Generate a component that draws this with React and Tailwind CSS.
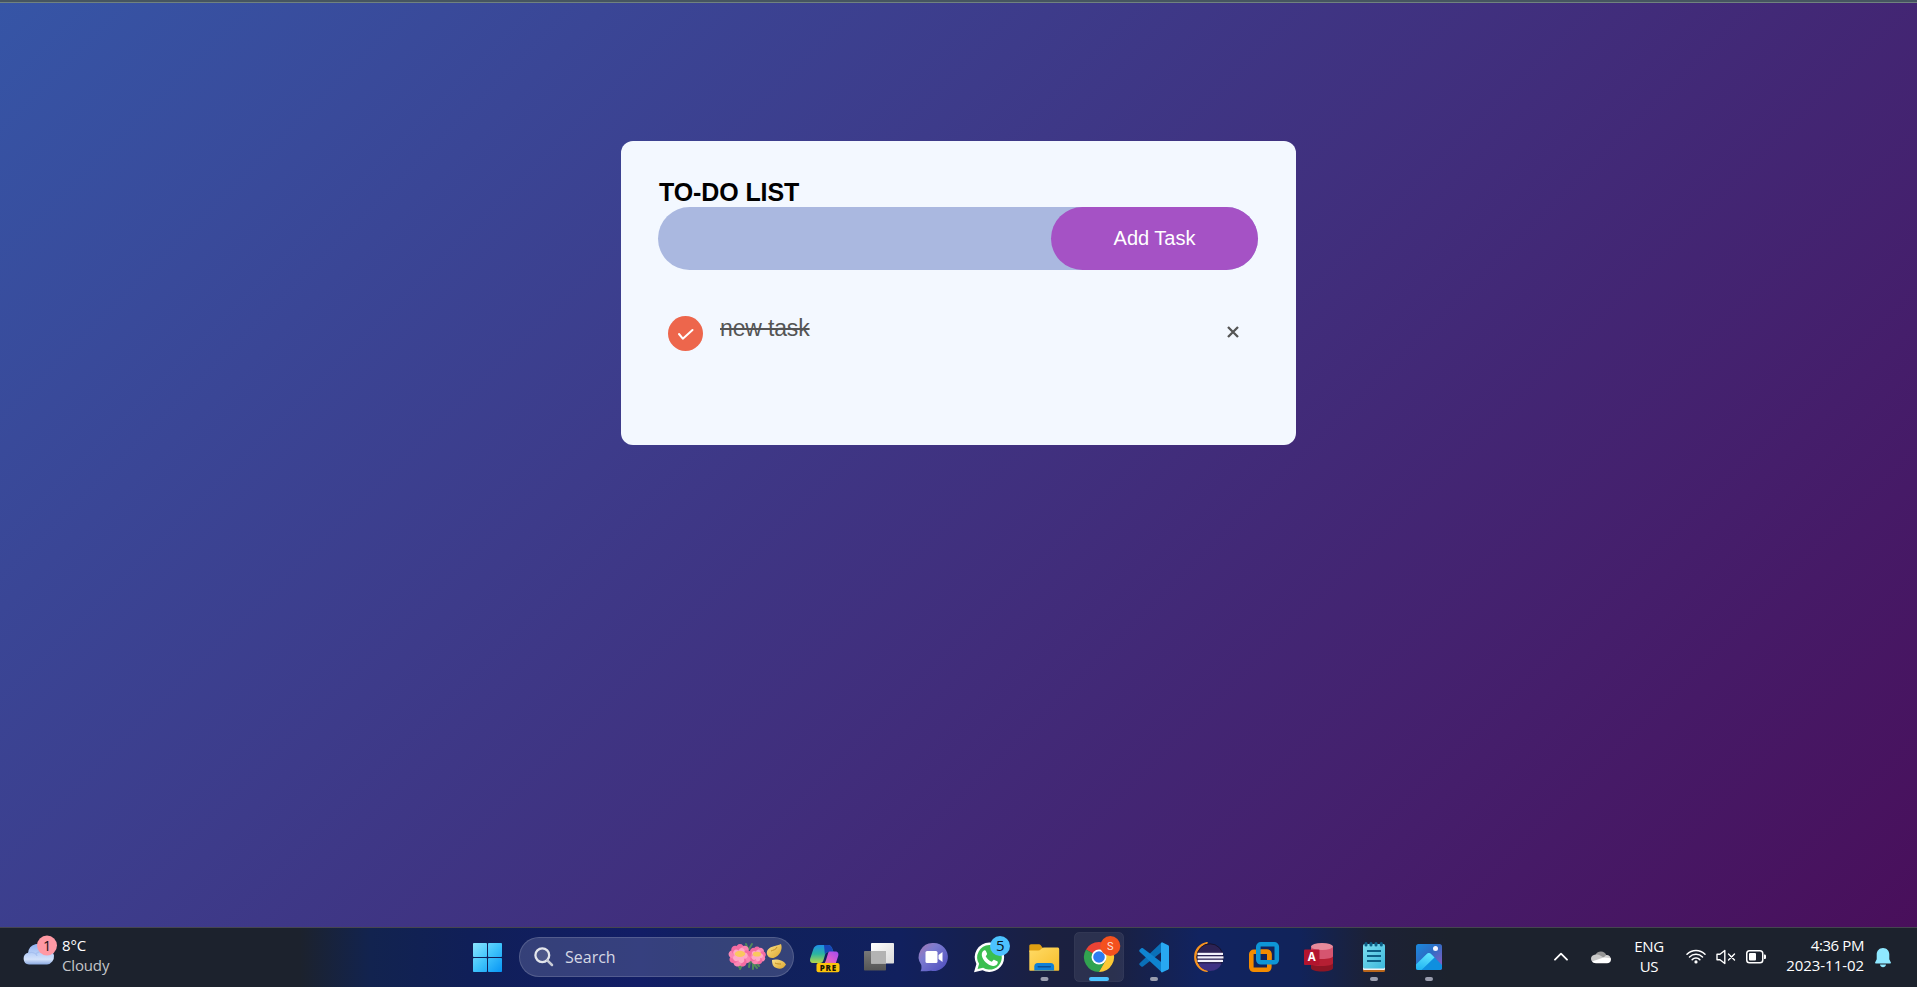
import React from "react";

const Copilot = () => (
  <svg width="55" height="59" viewBox="0 0 55 59">
    <defs>
      <linearGradient id="cpA" x1="0" y1="0" x2="0" y2="1">
        <stop offset="0" stopColor="#1f8fe8" />
        <stop offset="0.5" stopColor="#2bb5a0" />
        <stop offset="1" stopColor="#b4d84a" />
      </linearGradient>
      <linearGradient id="cpB" x1="1" y1="0" x2="0" y2="1">
        <stop offset="0" stopColor="#a04bf0" />
        <stop offset="0.5" stopColor="#d95bd0" />
        <stop offset="1" stopColor="#f58a6a" />
      </linearGradient>
    </defs>
    <path d="M22 17h9c2 0 3 1 4 3l1.500 4h-5c-2 0-3 1-3.500 3l-1.500 5c-.6 2-1.500 3-3.500 3h-7c-2.500 0-3.500-2-2.800-4.500l3-9C17 18.500 19 17 22 17z" fill="url(#cpA)" />
    <path d="M27 17h4c2 0 3 1 4 3l1.500 4h-5c-2 0-3 .8-3.600 2.600z" fill="#1746b8" />
    <path d="M33 23.500h5c3 0 4 2 3.200 4.500l-3 9H24l3-1.500c1-.6 1.600-2 2-3.500l2-6.500c.4-1.400 1-2 2-2z" fill="url(#cpB)" />
    <rect x="19.500" y="35" width="23" height="9.300" rx="2" fill="#fdc40a" />
    <text x="31.300" y="42.600" fontSize="8" fontWeight="800" textAnchor="middle" letterSpacing="0.7" fill="#1b1608" fontFamily="Open Sans, sans-serif">PRE</text>
  </svg>
);

const TaskView = () => (
  <svg width="55" height="59" viewBox="0 0 55 59">
    <defs>
      <linearGradient id="tvA" x1="0" y1="0" x2="1" y2="1">
        <stop offset="0" stopColor="#fff" />
        <stop offset="1" stopColor="#d9d9d9" />
      </linearGradient>
      <linearGradient id="tvB" x1="0" y1="0" x2="0" y2="1">
        <stop offset="0" stopColor="#787878" />
        <stop offset="1" stopColor="#555" />
      </linearGradient>
    </defs>
    <rect x="12" y="23" width="22" height="19.500" rx="0.800" fill="url(#tvB)" />
    <rect x="19" y="15" width="23" height="20.500" rx="0.800" fill="url(#tvA)" />
    <rect x="19" y="23" width="15" height="12.500" fill="#b3b3b3" />
  </svg>
);

const Chat = () => (
  <svg width="55" height="59" viewBox="0 0 55 59">
    <defs>
      <linearGradient id="chA" x1="0" y1="0" x2="1" y2="1">
        <stop offset="0" stopColor="#a878b0" />
        <stop offset="0.350" stopColor="#7b7bd0" />
        <stop offset="1" stopColor="#4b4bbd" />
      </linearGradient>
    </defs>
    <path d="M27 15a14 14 0 1 1-3 27.700c-3 .5-6 .6-10.500.6 1-2 1.200-3.300.8-6.300A14 14 0 0 1 27 15z" fill="url(#chA)" />
    <rect x="18.500" y="23" width="12" height="12" rx="1.500" fill="#fff" />
    <path d="M31.500 27l4-3v10l-4-3z" fill="#fff" />
  </svg>
);

const WhatsApp = () => (
  <svg width="55" height="59" viewBox="0 0 55 59">
    <path d="M27.300 14.500a14.700 14.700 0 1 1-6.700 27.700L12 44.300l2.400-8.200A14.700 14.700 0 0 1 27.300 14.500z" fill="#fff" />
    <path d="M27.300 17a12.300 12.300 0 1 1-6.200 22.800l-5.500 1.300 1.500-5.300A12.300 12.300 0 0 1 27.300 17z" fill="#3bbf50" />
    <path d="M22.300 22.300c.7-.2 1.300 0 1.600.7l1.100 2.600c.2.600 0 1.100-1.300 2.600 1.600 3 3.500 4.500 6.200 5.600 1.400-1.700 1.800-2.200 2.500-1.900l2.800 1.400c.7.400.7.900.4 1.900-.7 2-2.600 2.900-4.600 2.700-5.500-.8-10.300-5.500-11.200-10.700-.2-2 .9-4.500 2.500-4.900z" fill="#fff" />
    <circle cx="38" cy="18" r="10" fill="#4cc2ff" />
    <text x="38.200" y="23.300" fontSize="15" textAnchor="middle" fill="#0a1420" fontFamily="Open Sans, sans-serif">5</text>
  </svg>
);

const Explorer = () => (
  <svg width="55" height="59" viewBox="0 0 55 59">
    <defs>
      <linearGradient id="exA" x1="0" y1="0" x2="1" y2="1">
        <stop offset="0" stopColor="#ffdb66" />
        <stop offset="1" stopColor="#f7bd2a" />
      </linearGradient>
    </defs>
    <path d="M12.300 18c0-1 .7-1.700 1.700-1.700h7.500c1 0 1.600.3 2.300 1l2 2.700-4 4h-9.500z" fill="#e09f12" />
    <path d="M12.300 22.500h9c1 0 1.700-.3 2.300-1l1.400-1.300c.5-.5 1.200-.7 2-.7h13.500c1 0 1.700.7 1.700 1.700v20.500c0 .6-.4 1-1 1h-28c-.5 0-.9-.4-.9-1z" fill="url(#exA)" />
    <path d="M17.300 42.500v-4c0-2 1.300-3.500 3.300-3.500h13.200c2 0 3.300 1.500 3.300 3.500v4z" fill="#0f80d7" />
    <rect x="20.500" y="38" width="13.500" height="1.500" rx="0.700" fill="#0a4f96" />
    <rect x="23.500" y="49" width="8" height="4" rx="2" fill="#9a9dae" />
  </svg>
);

const Chrome = () => (
  <svg width="55" height="59" viewBox="0 0 55 59">
    <rect x="2.500" y="4.500" width="49" height="49" rx="4.500" fill="#fff" fillOpacity="0.080" stroke="#fff" strokeOpacity="0.070" />
    <path d="M27 29L14 21.500A15 15 0 0 1 40 21.500L27 21.500z" fill="#ea4335" />
    <path d="M27 29L14 21.500A15 15 0 0 0 27 44l6.500-11.250z" fill="#31a350" />
    <path d="M27 21.500H40A15 15 0 0 1 27 44l6.500-11.250z" fill="#fcc934" />
    <circle cx="27" cy="29" r="7.500" fill="#fff" />
    <circle cx="27" cy="29" r="5.800" fill="#2f7cf0" />
    <circle cx="38.300" cy="18" r="10" fill="#f4511e" />
    <text x="38.300" y="22" fontSize="11" textAnchor="middle" fill="#fff" fillOpacity="0.850" fontFamily="Roboto, sans-serif">S</text>
    <rect x="17" y="49" width="20" height="4" rx="2" fill="#4cc2ff" />
  </svg>
);

const VsCode = () => (
  <svg width="55" height="59" viewBox="0 0 55 59">
    <path d="M34.500 14.500v9.500L16 38.500c-.5.400-1.200.4-1.700 0l-1.700-1.500c-.5-.5-.5-1.200 0-1.700z" fill="#0a70b8" />
    <path d="M12.600 21.700l1.700-1.500c.5-.4 1.200-.4 1.700 0l18.500 14v9.800l-21.900-20.300c-.5-.6-.5-1.500 0-2z" fill="#0f84d0" />
    <path d="M34 15v29l1 .6 6.200-3c.5-.3.800-.8.800-1.400V18.600c0-.6-.3-1.100-.8-1.400l-6.200-2.900z" fill="#28a8f2" />
    <rect x="23" y="49" width="8" height="4" rx="2" fill="#9a9dae" />
  </svg>
);

const Eclipse = () => (
  <svg width="55" height="59" viewBox="0 0 55 59">
    <path d="M25 14.800a14.400 14.400 0 0 0 0 28.400A17.500 17.500 0 0 1 25 14.800z" fill="#f79320" stroke="#f79320" strokeWidth="1.800" strokeLinejoin="round" />
    <circle cx="28" cy="29" r="13.200" fill="#2c2255" stroke="#17122f" />
    <path d="M16.300 35.500a13 13 0 0 0 23.500 0z" fill="#3f3184" />
    <g fill="#f2f0fa">
      <rect x="15.500" y="24.800" width="25.500" height="2.200" />
      <rect x="15.500" y="28.300" width="26" height="2.200" />
      <rect x="15.500" y="31.800" width="25.500" height="2.200" />
    </g>
  </svg>
);

const VmWare = () => (
  <svg width="55" height="59" viewBox="0 0 55 59" fill="none" strokeWidth="4.600">
    <rect x="14.300" y="23.800" width="18" height="18" rx="2.500" stroke="#f38b00" />
    <rect x="21.300" y="16.300" width="18.500" height="18" rx="2.500" stroke="#0e95d6" />
    <path d="M24 23.800h5.800c1.700 0 2.500.8 2.500 2.500v5.500" stroke="#f38b00" />
  </svg>
);

const Access = () => (
  <svg width="55" height="59" viewBox="0 0 55 59">
    <path d="M19 18.500v21.500c0 2 5 3.500 11 3.500s11-1.500 11-3.500V18.500z" fill="#8d1524" />
    <path d="M19 18.500v17c0 2 5 2.500 11 2.500s11-1 11-3V18.500z" fill="#b51f33" />
    <path d="M19 18.500v10c0 2 5 2.500 11 2.500s11-1 11-3V18.500z" fill="#d65570" />
    <ellipse cx="30" cy="18.500" rx="11" ry="3.500" fill="#e68a9b" />
    <rect x="12" y="21.500" width="15.500" height="15.500" rx="1" fill="#b3142e" />
    <text x="19.700" y="33.300" fontSize="11.500" fontWeight="700" textAnchor="middle" fill="#fff" fontFamily="Open Sans, sans-serif">A</text>
  </svg>
);

const Notepad = () => (
  <svg width="55" height="59" viewBox="0 0 55 59">
    <defs>
      <linearGradient id="npA" x1="0" y1="0" x2="1" y2="1">
        <stop offset="0" stopColor="#7ddff0" />
        <stop offset="1" stopColor="#3cb8dc" />
      </linearGradient>
    </defs>
    <rect x="16" y="36" width="22" height="8" rx="1.500" fill="#b9651b" />
    <rect x="16" y="34" width="22" height="8" rx="1" fill="#f3f3f3" />
    <rect x="16" y="16" width="22" height="24.500" rx="1.500" fill="url(#npA)" />
    <g fill="#0d5f86">
      <rect x="17.500" y="14" width="3" height="4.500" rx="1.500" />
      <rect x="22.500" y="14" width="3" height="4.500" rx="1.500" />
      <rect x="27.500" y="14" width="3" height="4.500" rx="1.500" />
      <rect x="32.800" y="14" width="3" height="4.500" rx="1.500" />
      <rect x="20" y="22" width="14" height="2" />
      <rect x="20" y="27" width="14" height="2" />
      <rect x="20" y="32" width="14" height="2" />
    </g>
    <rect x="23" y="49" width="8" height="4" rx="2" fill="#9a9dae" />
  </svg>
);

const Photos = () => (
  <svg width="55" height="59" viewBox="0 0 55 59">
    <defs>
      <linearGradient id="phA" x1="0" y1="0" x2="1" y2="1">
        <stop offset="0" stopColor="#1a8ade" />
        <stop offset="0.450" stopColor="#2d6cc4" />
        <stop offset="1" stopColor="#9a5ac0" />
      </linearGradient>
      <linearGradient id="phB" gradientUnits="userSpaceOnUse" x1="27" y1="25" x2="22" y2="43">
        <stop offset="0" stopColor="#62e6ff" />
        <stop offset="1" stopColor="#22b4f2" />
      </linearGradient>
      <clipPath id="phC"><rect x="14" y="16" width="26" height="26" rx="2.500" /></clipPath>
    </defs>
    <g clipPath="url(#phC)">
      <rect x="14" y="16" width="26" height="26" fill="url(#phA)" />
      <path d="M24.500 26.200c1.600-1.600 3.200-1.600 4.800 0L42 39V43H14v-6.500z" fill="#0f8fdf" />
      <path d="M12 38.500l12.500-12.300c1.600-1.600 3.200-1.600 4.800 0l3.200 3.200L18.500 43H12z" fill="url(#phB)" />
    </g>
    <circle cx="33.500" cy="20.500" r="2.500" fill="#f4f6ff" />
    <rect x="23" y="49" width="8" height="4" rx="2" fill="#9a9dae" />
  </svg>
);

const Windows = () => (
  <svg width="29" height="29" viewBox="0 0 29 29">
    <defs>
      <linearGradient id="wn" gradientUnits="userSpaceOnUse" x1="0" y1="0" x2="29" y2="29">
        <stop offset="0" stopColor="#8be4ff" />
        <stop offset="0.500" stopColor="#3fc3fb" />
        <stop offset="1" stopColor="#0795f5" />
      </linearGradient>
    </defs>
    <g fill="url(#wn)">
      <rect width="14" height="14" rx="0.800" />
      <rect x="15" width="14" height="14" rx="0.800" />
      <rect y="15" width="14" height="14" rx="0.800" />
      <rect x="15" y="15" width="14" height="14" rx="0.800" />
    </g>
  </svg>
);

const Blossom = ({ x, y, r }) => (
  <g transform={`translate(${x} ${y}) scale(${r / 10})`}>
    {[0, 40, 80, 120, 160, 200, 240, 280, 320].map((a) => (
      <ellipse key={a} cx="0" cy="-6" rx="3.800" ry="4.500" fill={a % 80 ? "#fb86b4" : "#f46ca2"} transform={`rotate(${a})`} />
    ))}
    {[20, 92, 164, 236, 308].map((a) => (
      <ellipse key={a} cx="0" cy="-3.500" rx="2.800" ry="3.500" fill="#ffa9c6" transform={`rotate(${a})`} />
    ))}
    <ellipse cx="0" cy="-1.500" rx="4.800" ry="2.800" fill="#f9c85e" />
  </g>
);

const Flowers = () => (
  <svg width="60" height="32" viewBox="0 0 60 32">
    <defs>
      <linearGradient id="pt" x1="0" y1="0" x2="1" y2="1">
        <stop offset="0" stopColor="#fbe08a" />
        <stop offset="1" stopColor="#dba62c" />
      </linearGradient>
    </defs>
    <g stroke="#4f8a5a" strokeWidth="2" fill="none" strokeLinecap="round">
      <path d="M20 8L18 3M21 8l3-5M15 22l-3 6M12 23l-1 3M24 21l5 6M25 22l0 6M22 20l-1 6M28 22l3 3" />
    </g>
    <Blossom x={29} y={14.500} r={8.500} />
    <Blossom x={12} y={14.500} r={11} />
    <path d="M53 3c2 5-1 12-7.500 14C40 18 37 12 40 8.500 43.500 4.500 48 5.500 53 3z" fill="url(#pt)" />
    <path d="M44 19c4-1.500 12 0 14 4.500-2 4-6 5-9.500 3.500C45 26 44 23 44 19z" fill="url(#pt)" />
    <path d="M43 10c2-1 5-1 6-4M47 22c2 1 4 1 6 1" stroke="#c18f25" strokeWidth="1" fill="none" />
  </svg>
);

const Weather = () => (
  <svg width="36" height="32" viewBox="0 0 36 32">
    <defs>
      <linearGradient id="cl" x1="0" y1="0" x2="0" y2="1">
        <stop offset="0" stopColor="#8fb2f2" />
        <stop offset="0.750" stopColor="#d3e2fb" />
        <stop offset="1" stopColor="#8aa9e0" />
      </linearGradient>
    </defs>
    <path d="M7 29.500a6 6 0 0 1-.8-11.800A9.500 9.500 0 0 1 23.500 13a8.300 8.300 0 0 1 1.500 16.500z" fill="url(#cl)" />
    <path d="M6.200 18c4-1.500 7.500 0 9 2.800M14 18.500c4-3 10-3 13 1" stroke="#a5bfef" fill="none" strokeWidth="1.200" />
    <circle cx="25" cy="10.500" r="10" fill="#ff99a4" />
    <text x="25.200" y="15.800" fontSize="14.500" textAnchor="middle" fill="#1a1215" fontFamily="Open Sans, sans-serif">1</text>
  </svg>
);

const SearchIcon = () => (
  <svg width="20" height="20" viewBox="0 0 20 20" fill="none">
    <circle cx="8.300" cy="8.300" r="6.900" stroke="#e4e6ec" strokeWidth="2.300" fill="#fff" fillOpacity="0.120" />
    <path d="M13.300 13.300l4.700 4.700" stroke="#c9ccd6" strokeWidth="2.500" strokeLinecap="round" />
  </svg>
);

const Chevron = () => (
  <svg width="14" height="9" viewBox="0 0 14 9" fill="none">
    <path d="M1 7.700l6-6 6 6" stroke="#fff" strokeWidth="1.800" strokeLinecap="round" strokeLinejoin="round" />
  </svg>
);

const OneDrive = () => (
  <svg width="20" height="14" viewBox="0 0 20 14">
    <path d="M4.600 4.600A6 6 0 0 1 15.300 5c1.500 0 3 1 3.700 2.300L10 11z" fill="#969696" />
    <path d="M4.600 4.600c2.500-.6 4 .2 8 2.800L5 12.500C2 13 0 11 0 8.800 0 6.500 2 4.700 4.600 4.600z" fill="#c9c9c9" />
    <path d="M15.300 5c2.700 0 4.700 2 4.700 4.400L12 8z" fill="#d4d4d4" />
    <path d="M1 11.500L12.500 7.400 19.700 8.300c.9 2.700-1 4.900-3.700 4.900H4.800c-1.600 0-3-.6-3.800-1.700z" fill="#fff" />
  </svg>
);

const Wifi = () => (
  <svg width="20" height="15" viewBox="0 0 20 15" fill="none" stroke="#fff" strokeWidth="1.500" strokeLinecap="round">
    <path d="M1 5.300a12.700 12.700 0 0 1 18 0M3.500 8a9.200 9.200 0 0 1 13 0M6.200 10.600a5.400 5.400 0 0 1 7.600 0" />
    <circle cx="10" cy="12.900" r="1.600" fill="#fff" stroke="none" />
  </svg>
);

const Muted = () => (
  <svg width="20" height="16" viewBox="0 0 20 16" fill="none" stroke="#fff" strokeWidth="1.400" strokeLinejoin="round" strokeLinecap="round">
    <path d="M1 5.300h3L8.800 1.500v13L4 10.700H1z" />
    <path d="M12.500 5l6 6M18.500 5l-6 6" />
  </svg>
);

const Battery = () => (
  <svg width="20" height="14" viewBox="0 0 20 14" fill="none">
    <rect x="0.750" y="0.750" width="16" height="12" rx="2.800" stroke="#fff" strokeWidth="1.500" />
    <rect x="3" y="3" width="7" height="7.500" rx="1" fill="#fff" />
    <path d="M18 4.500h.7c.7 0 1.300.6 1.300 1.300v1.900c0 .7-.6 1.300-1.300 1.300H18z" fill="#fff" />
  </svg>
);

const Bell = () => (
  <svg width="16" height="20" viewBox="0 0 16 20" fill="#8fe8ff">
    <path d="M8 0c3.800 0 6.300 2.900 6.300 6.400v4.800l1.600 3.200c.2.600-.1 1.100-.7 1.100H.8c-.6 0-.9-.5-.7-1.100l1.600-3.200V6.400C1.700 2.900 4.200 0 8 0z" />
    <path d="M5 16.500h6c-.3 1.700-1.400 2.700-3 2.700s-2.700-1-3-2.700z" />
  </svg>
);

const apps = [Copilot, TaskView, Chat, WhatsApp, Explorer, Chrome, VsCode, Eclipse, VmWare, Access, Notepad, Photos];

function TodoCard() {
  return (
    <section className="mx-auto h-[304px] w-[675px] rounded-xl bg-[#f3f8ff] pt-[37px] pr-[38px] pl-[37px]">
      <h2 className="flex h-[29px] items-center pl-px font-['Liberation_Sans',sans-serif] text-[25px] leading-[29px] font-bold tracking-[-0.1px] text-black">TO-DO LIST</h2>
      <div className="flex h-[63px] w-[600px] justify-end rounded-full bg-[#aab8e0]">
        <button className="h-full w-[207px] rounded-full bg-[#a552c5] pb-[2px] font-['Liberation_Sans',sans-serif] text-[20px] text-white">Add Task</button>
      </div>
      <div className="mt-[46px] flex items-start pl-[10px]">
        <svg width="35" height="35" viewBox="0 0 35 35" fill="none">
          <circle cx="17.500" cy="17.500" r="17.500" fill="#ed664c" />
          <path d="M11 18l3.800 4.700L24.500 14" stroke="#fff" strokeWidth="2" strokeLinecap="round" strokeLinejoin="round" />
        </svg>
        <span className="ml-[17px] font-['Liberation_Sans',sans-serif] text-[23px] leading-[24px] tracking-[-0.15px] text-[#555] line-through">new task</span>
        <svg className="mt-[10px] mr-[19px] ml-auto" width="12" height="12" viewBox="0 0 12 12">
          <path d="M1 1l10 10M11 1L1 11" stroke="#555" strokeWidth="2.300" />
        </svg>
      </div>
    </section>
  );
}

function Taskbar() {
  return (
    <footer className="flex h-[60px] border-t border-[#45454f] bg-[linear-gradient(90deg,#1c222d_0px,#1c222d_300px,#12234f_370px,#101f58_470px,#121d66_640px,#10215c_740px,#11205e_900px,#1b2040_1050px,#1a2040_1110px,#112360_1200px,#11235a_1300px,#1c2136_1370px,#1c222d_1450px)] font-['Open_Sans','Noto_Sans',sans-serif] text-[15px] leading-5 text-white">
      <div className="flex w-[473px] pt-[7px] pl-[22px]">
        <Weather />
        <div className="ml-1 tracking-[-0.15px]">
          <div>8°C</div>
          <div className="text-[#c4c6ca]">Cloudy</div>
        </div>
      </div>
      <div className="pt-[15px]">
        <Windows />
      </div>
      <div className="mt-[9px] ml-[17px] flex h-10 w-[275px] items-center rounded-full border border-white/15 bg-[#8c93b8]/30 pl-[14px]">
        <SearchIcon />
        <span className="ml-[11px] text-[16px] text-[#d5d8e4]">Search</span>
        <div className="ml-auto pr-[5px]">
          <Flowers />
        </div>
      </div>
      <div className="ml-[3px] flex">
        {apps.map((App, i) => (
          <App key={i} />
        ))}
      </div>
      <div className="ml-auto flex pr-[26px]">
        <div className="pt-[24px]"><Chevron /></div>
        <div className="ml-[23px] pt-[22px]"><OneDrive /></div>
        <div className="ml-[18px] w-[40px] pt-[8px] text-center tracking-[-0.3px]">
          <div>ENG</div>
          <div>US</div>
        </div>
        <div className="ml-[17px] pt-[21px]"><Wifi /></div>
        <div className="ml-[10px] pt-[21px]"><Muted /></div>
        <div className="ml-[10px] pt-[22px]"><Battery /></div>
        <div className="w-[98px] pt-[7px] text-right">
          <div className="tracking-[-0.4px]">4:36 PM</div>
          <div className="tracking-[-0.05px]">2023-11-02</div>
        </div>
        <div className="ml-[11px] pt-[20px]"><Bell /></div>
      </div>
    </footer>
  );
}

export default function App() {
  return (
    <div className="flex h-[987px] w-[1917px] flex-col overflow-hidden">
      <div className="h-[3px] shrink-0 border-b border-[#70827f] bg-[#465560]" />
      <main className="flex-1 bg-[linear-gradient(135deg,#3655a6,#490f5b)] pt-[138px]">
        <TodoCard />
      </main>
      <Taskbar />
    </div>
  );
}
